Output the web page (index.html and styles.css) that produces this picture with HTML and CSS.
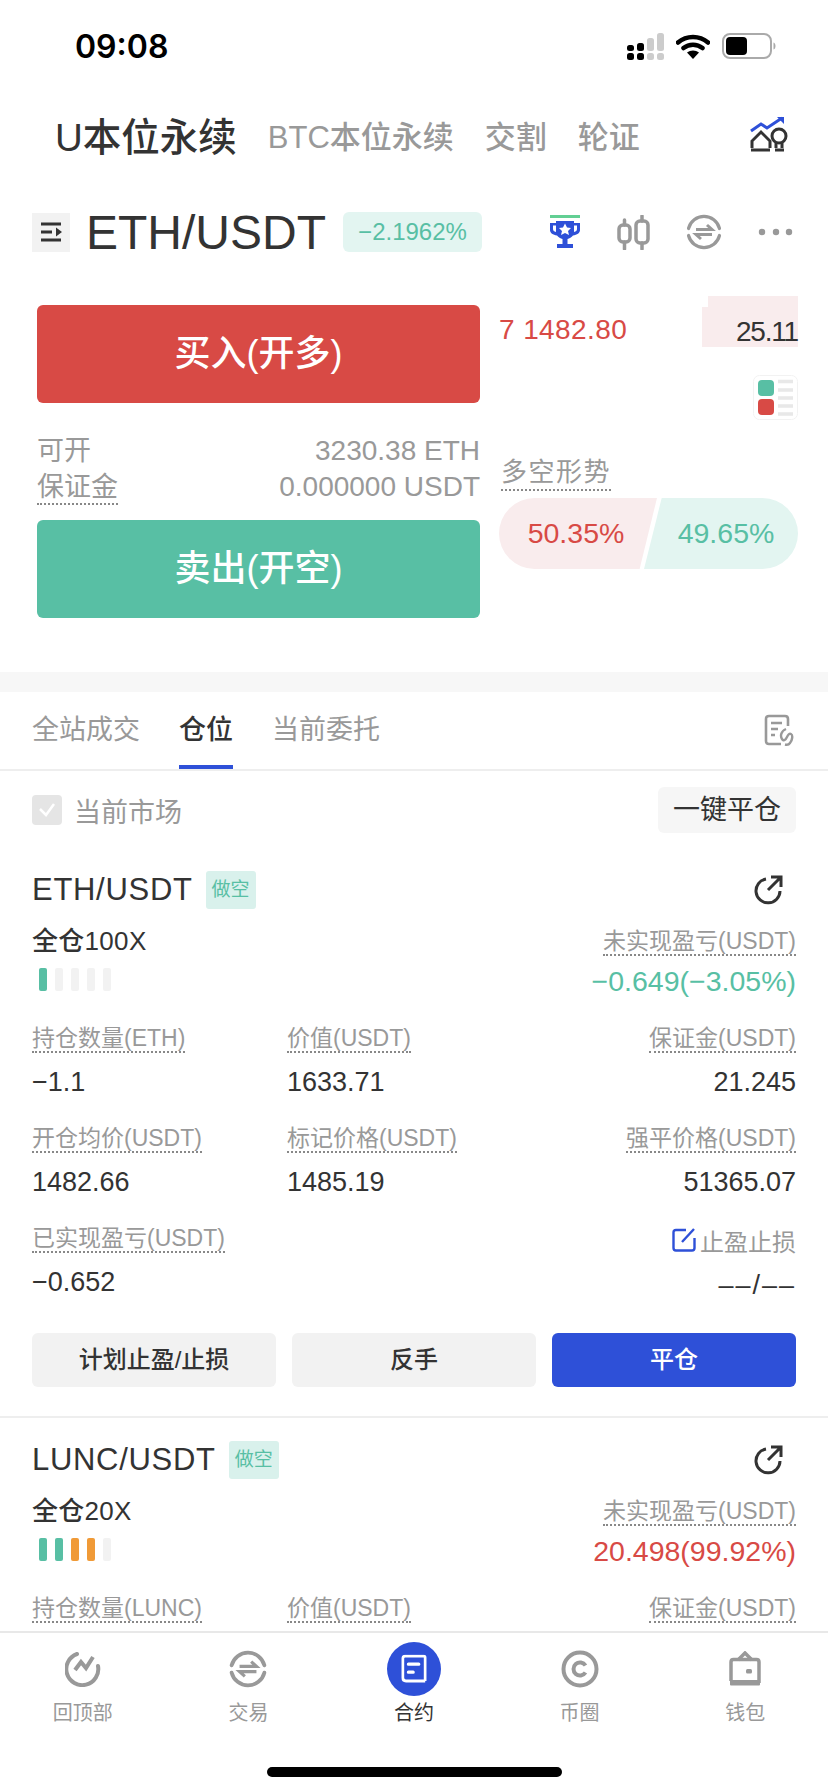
FILE: index.html
```html
<!DOCTYPE html>
<html lang="zh-CN">
<head>
<meta charset="UTF-8">
<title>ETH/USDT</title>
<meta name="viewport" content="width=device-width">
<link rel="stylesheet" href="styles.css">
</head>
<body>
<div class="screen">
<div class="main">

<div class="status">
  <span class="time">09:08</span>
  <div class="status-icons">
    <svg width="38" height="27" viewBox="0 0 38 27">
      <rect x="1" y="12" width="7" height="6" rx="2.5" fill="#000"/><rect x="11" y="10" width="7" height="8" rx="2.5" fill="#000"/>
      <rect x="1" y="20" width="7" height="7" rx="2.5" fill="#000"/><rect x="11" y="20" width="7" height="7" rx="2.5" fill="#000"/>
      <rect x="21" y="5" width="7" height="13" rx="2.5" fill="#ccc"/><rect x="31" y="0" width="7" height="18" rx="2.5" fill="#ccc"/>
      <rect x="21" y="20" width="7" height="7" rx="2.5" fill="#ccc"/><rect x="31" y="20" width="7" height="7" rx="2.5" fill="#ccc"/>
    </svg>
    <svg width="34" height="25" viewBox="0 0 34 25">
      <path d="M2 8.5C10.500 1 23.500 1 32 8.500M7.500 14C13 9.500 21 9.500 26.500 14" fill="none" stroke="#000" stroke-width="4.500" stroke-linecap="round"/>
      <path d="M11 18.500C14.500 15.800 19.500 15.800 23 18.500L17 25Z" fill="#000"/>
    </svg>
    <svg width="54" height="26" viewBox="0 0 54 26">
      <rect x="1" y="1" width="48" height="24" rx="7" fill="none" stroke="#aaa" stroke-width="2"/>
      <rect x="4" y="4" width="21" height="18" rx="4" fill="#000"/>
      <path d="M51.500 9.500C53 10 53.500 11.500 53.500 13S53 16 51.500 16.500Z" fill="#aaa"/>
    </svg>
  </div>
</div>

<div class="market-tabs">
  <span class="market-tab active">U本位永续</span>
  <span class="market-tab">BTC本位永续</span>
  <span class="market-tab">交割</span>
  <span class="market-tab">轮证</span>
  <svg class="market-icon" width="38" height="36" viewBox="0 0 38 36">
    <path d="M1 15L11 8L17 12L32 2" fill="none" stroke="#2e50d8" stroke-width="3"/>
    <path d="M27 1H34V8Z" fill="#2e50d8"/>
    <path d="M2 32V25L11 16L20 25V32" fill="none" stroke="#333" stroke-width="3"/>
    <circle cx="29" cy="20" r="7" fill="none" stroke="#333" stroke-width="3"/>
    <path d="M26 26V32M32 26V32M1 34H20M25 34H34" fill="none" stroke="#333" stroke-width="3"/>
  </svg>
</div>

<div class="symbol-row">
  <div class="side-toggle">
    <svg width="24" height="22" viewBox="0 0 24 22">
      <path d="M2 3H22M2 19H22M2 11H13" stroke="#333" stroke-width="3" fill="none"/>
      <path d="M17 6.500L23 11L17 15.500Z" fill="#333"/>
    </svg>
  </div>
  <span class="symbol-name">ETH/USDT</span>
  <span class="symbol-change">−2.1962%</span>
  <div class="symbol-icons">
    <svg width="32" height="34" viewBox="0 0 32 34">
      <rect x="1" y="0" width="30" height="3" fill="#62cf93"/>
      <path d="M7 6H25V8H31V15C31 18 28 20 24 20.500C22.500 22.500 20.500 23.500 18.500 24V29H24V33H8V29H13.500V24C11.500 23.500 9.500 22.500 8 20.500C4 20 1 18 1 15V8H7Z" fill="#2e50d8"/>
      <path d="M4 10.500H7V17C5 16.500 4 15.500 4 14ZM28 10.500H25V17C27 16.500 28 15.500 28 14Z" fill="#fff"/>
      <path d="M16 8.500L18 12.500L22 13L19 16L20 20L16 18L12 20L13 16L10 13L14 12.500Z" fill="#fff"/>
    </svg>
    <svg width="33" height="35" viewBox="0 0 33 35">
      <path d="M7.500 5V10M7.500 27V34M25 1V6M25 28V34" stroke="#999" stroke-width="3.500" stroke-linecap="round"/>
      <rect x="2" y="10" width="11" height="17" rx="4" fill="none" stroke="#999" stroke-width="3.500"/>
      <rect x="19" y="6" width="12" height="22" rx="4" fill="none" stroke="#999" stroke-width="3.500"/>
    </svg>
    <svg width="36" height="36" viewBox="0 0 36 36">
      <path d="M2.500 14.500A16 16 0 0 1 33.500 14.500M33.500 21.500A16 16 0 0 1 2.500 21.500" fill="none" stroke="#999" stroke-width="3.200" stroke-linecap="round"/>
      <path d="M10 15.500H26L21 11M26 20.500H10L15 25" fill="none" stroke="#999" stroke-width="3"/>
    </svg>
    <svg width="36" height="8" viewBox="0 0 36 8">
      <circle cx="4" cy="4" r="3.200" fill="#999"/><circle cx="18" cy="4" r="3.200" fill="#999"/><circle cx="31" cy="4" r="3.200" fill="#999"/>
    </svg>
  </div>
</div>

<div class="trade">
  <div class="trade-left">
    <div class="big-btn buy">买入(开多)</div>
    <div class="trade-info">
      <div class="info-line"><span>可开</span><span class="info-val">3230.38 ETH</span></div>
      <div class="info-line"><span class="dotted">保证金</span><span class="info-val">0.000000 USDT</span></div>
    </div>
    <div class="big-btn sell">卖出(开空)</div>
  </div>
  <div class="trade-right">
    <div class="book-row">
      <span class="book-price">7 1482.80</span>
      <div class="book-qty">
        <div class="book-depth-top"></div>
        <div class="book-depth"><span>25.11</span></div>
      </div>
    </div>
    <div class="book-switch">
      <svg width="45" height="45" viewBox="0 0 45 45">
        <rect x="0.500" y="0.500" width="44" height="44" rx="6" fill="#fff" stroke="#f2f2f2"/>
        <rect x="5" y="5" width="16" height="16" rx="4" fill="#58bfa4"/>
        <rect x="5" y="24" width="16" height="16" rx="4" fill="#d84a45"/>
        <path d="M25 6.500H40M25 15H40M25 23H40M25 31H40M25 39H40" stroke="#e8e8e8" stroke-width="3.500"/>
      </svg>
    </div>
    <div class="trend-title"><span class="dotted">多空形势</span></div>
    <div class="trend-bar">
      <div class="trend-long">50.35%</div>
      <div class="trend-short">49.65%</div>
    </div>
  </div>
</div>

<div class="band"></div>

<div class="tabs">
  <span class="tab">全站成交</span>
  <span class="tab active">仓位</span>
  <span class="tab">当前委托</span>
  <svg class="tab-icon" width="30" height="32" viewBox="0 0 30 32">
    <path d="M17 30H5C3 30 2 29 2 27V5C2 3 3 2 5 2H21C23 2 24 3 24 5V12" fill="none" stroke="#999" stroke-width="2.600"/>
    <path d="M7 9H18M7 15H14M7 21H11" stroke="#999" stroke-width="2.600"/>
    <path d="M22 15C17 17 16 22 18 25C20 28 22 25 23 23C24 21 25 19 27 20C29 21 28.500 26 26 29C25 30.500 23 31 21 30.500" fill="none" stroke="#999" stroke-width="2.400"/>
  </svg>
</div>

<div class="filter">
  <div class="check">
    <svg width="18" height="14" viewBox="0 0 18 14"><path d="M2 6L8 12L16 1" fill="none" stroke="#fff" stroke-width="2.500"/></svg>
  </div>
  <span class="check-label">当前市场</span>
  <span class="close-all">一键平仓</span>
</div>

<div class="card">
  <div class="card-head">
    <span class="pair">ETH/USDT</span>
    <span class="dir">做空</span>
    <svg class="share" width="30" height="30" viewBox="0 0 30 30">
      <path d="M13 4A12 12 0 1 0 27 16" fill="none" stroke="#333" stroke-width="3"/>
      <path d="M15 15L27 3M18 2H28V12" fill="none" stroke="#333" stroke-width="3"/>
    </svg>
  </div>
  <div class="card-top">
    <div>
      <div class="lever">全仓100X</div>
      <div class="risk">
        <i class="on"></i><i></i><i></i><i></i><i></i>
      </div>
    </div>
    <div class="pnl">
      <span class="label">未实现盈亏(USDT)</span>
      <div class="pnl-val green">−0.649(−3.05%)</div>
    </div>
  </div>
  <div class="stats">
    <div class="stat"><span class="label">持仓数量(ETH)</span><div class="val">−1.1</div></div>
    <div class="stat"><span class="label">价值(USDT)</span><div class="val">1633.71</div></div>
    <div class="stat right"><span class="label">保证金(USDT)</span><div class="val">21.245</div></div>
    <div class="stat"><span class="label">开仓均价(USDT)</span><div class="val">1482.66</div></div>
    <div class="stat"><span class="label">标记价格(USDT)</span><div class="val">1485.19</div></div>
    <div class="stat right"><span class="label">强平价格(USDT)</span><div class="val">51365.07</div></div>
    <div class="stat"><span class="label">已实现盈亏(USDT)</span><div class="val">−0.652</div></div>
    <div class="stat"></div>
    <div class="stat right">
      <span class="tpsl">
        <svg width="24" height="24" viewBox="0 0 24 24">
          <path d="M14 2H4C2.500 2 1.500 3 1.500 4.500V20C1.500 21.500 2.500 22.500 4 22.500H20C21.500 22.500 22.500 21.500 22.500 20V10" fill="none" stroke="#2e50d8" stroke-width="2.400"/>
          <path d="M10 14L22 1" fill="none" stroke="#2e50d8" stroke-width="2.400"/>
        </svg>止盈止损
      </span>
      <div class="val thin">––/––</div>
    </div>
  </div>
  <div class="actions">
    <div class="action">计划止盈/止损</div>
    <div class="action">反手</div>
    <div class="action primary">平仓</div>
  </div>
</div>

<div class="card">
  <div class="card-head">
    <span class="pair">LUNC/USDT</span>
    <span class="dir">做空</span>
    <svg class="share" width="30" height="30" viewBox="0 0 30 30">
      <path d="M13 4A12 12 0 1 0 27 16" fill="none" stroke="#333" stroke-width="3"/>
      <path d="M15 15L27 3M18 2H28V12" fill="none" stroke="#333" stroke-width="3"/>
    </svg>
  </div>
  <div class="card-top">
    <div>
      <div class="lever">全仓20X</div>
      <div class="risk">
        <i class="on"></i><i class="on"></i><i class="warn"></i><i class="warn"></i><i></i>
      </div>
    </div>
    <div class="pnl">
      <span class="label">未实现盈亏(USDT)</span>
      <div class="pnl-val red">20.498(99.92%)</div>
    </div>
  </div>
  <div class="stats">
    <div class="stat"><span class="label">持仓数量(LUNC)</span></div>
    <div class="stat"><span class="label">价值(USDT)</span></div>
    <div class="stat right"><span class="label">保证金(USDT)</span></div>
  </div>
</div>

</div>

<div class="nav">
  <div class="nav-items">
    <div class="nav-item">
      <div class="nav-icon">
        <svg width="36" height="36" viewBox="0 0 36 36">
          <path d="M12 3A16 16 0 1 0 33 15" fill="none" stroke="#999" stroke-width="4" stroke-linecap="round"/>
          <path d="M10 19L16 11L21 17L28 6" fill="none" stroke="#999" stroke-width="4"/>
        </svg>
      </div>
      <span>回顶部</span>
    </div>
    <div class="nav-item">
      <div class="nav-icon">
        <svg width="38" height="38" viewBox="0 0 36 36">
          <path d="M2.500 14.500A16 16 0 0 1 33.500 14.500M33.500 21.500A16 16 0 0 1 2.500 21.500" fill="none" stroke="#999" stroke-width="3.600" stroke-linecap="round"/>
          <path d="M10 15.500H26L21 11M26 20.500H10L15 25" fill="none" stroke="#999" stroke-width="3"/>
        </svg>
      </div>
      <span>交易</span>
    </div>
    <div class="nav-item current">
      <div class="nav-icon">
        <div class="nav-bubble">
          <svg width="32" height="36" viewBox="0 0 32 36">
            <path d="M30 33H6C3.500 33 2 31.500 2 29V5C2 3.500 3 2 5 2H28C29.500 2 30 3 30 4V33" fill="none" stroke="#fff" stroke-width="3.500"/>
            <path d="M9 12H22M9 22H15" stroke="#fff" stroke-width="4" stroke-linecap="round"/>
          </svg>
        </div>
      </div>
      <span>合约</span>
    </div>
    <div class="nav-item">
      <div class="nav-icon">
        <svg width="38" height="38" viewBox="0 0 38 38">
          <circle cx="19" cy="19" r="16.500" fill="none" stroke="#999" stroke-width="4"/>
          <path d="M24.500 15.500A6.500 6.500 0 1 0 24.500 22.500" fill="none" stroke="#999" stroke-width="4"/>
        </svg>
      </div>
      <span>币圈</span>
    </div>
    <div class="nav-item">
      <div class="nav-icon">
        <svg width="32" height="36" viewBox="0 0 32 36">
          <path d="M9 9L16 2L23 9" fill="none" stroke="#999" stroke-width="3.500"/>
          <path d="M30 32V11C30 9.500 29 8.500 27.500 8.500H4.500C3 8.500 2 9.500 2 11V30" fill="none" stroke="#999" stroke-width="3.500"/>
          <rect x="1" y="29" width="30" height="5.500" rx="1" fill="#999"/>
          <rect x="17" y="18" width="6" height="4.500" rx="1.500" fill="#999"/>
        </svg>
      </div>
      <span>钱包</span>
    </div>
  </div>
  <div class="home-bar"></div>
</div>
</div>
</body>
</html>
```

FILE: styles.css
```css
* {box-sizing: border-box;}

body {margin: 0;
      background: #fff;
      font-family: "Liberation Sans", "Noto Sans CJK SC", sans-serif;
      color: #333;}

.screen {width: 828px;
         height: 1792px;
         display: flex;
         flex-direction: column;
         overflow: hidden;}

.main {flex: 1;
       min-height: 0;
       overflow: hidden;}

/* status bar */
.status {height: 92px;
         padding: 0 52px 0 75px;
         display: flex;
         align-items: center;
         justify-content: space-between;}
.time {font-family: "Inter", sans-serif;
       font-size: 32px;
       font-weight: 600;
       color: #000;}
.status-icons {display: flex;
               align-items: center;
               gap: 12px;}

/* top tabs */
.market-tabs {height: 84px;
              padding: 0 40px 0 55px;
              display: flex;
              align-items: center;
              gap: 31px;}
.market-tab {font-size: 31px;
             color: #999;
             font-weight: 500;}
.market-tab.active {font-size: 38.500px;
                    color: #333;}
.market-icon {margin-left: auto;}

.symbol-row {height: 112px;
             padding: 0 34px 0 32px;
             display: flex;
             align-items: center;}
.side-toggle {width: 38px;
              height: 39px;
              background: #f2f2f2;
              display: flex;
              align-items: center;
              justify-content: center;}
.symbol-name {font-size: 48px;
              margin-left: 16px;}
.symbol-change {margin-left: 17px;
                width: 139px;
                height: 40px;
                line-height: 40px;
                border-radius: 6px;
                background: #e3f5f1;
                color: #58bfa4;
                font-size: 24px;
                text-align: center;}
.symbol-icons {margin-left: auto;
               display: flex;
               align-items: center;
               gap: 36px;}

/* buy / sell */
.trade {height: 367px;
        margin-top: 17px;
        padding: 0 30px 0 37px;
        display: flex;
        gap: 19px;}
.trade-left {width: 443px;}
.trade-right {width: 299px;}

.big-btn {height: 98px;
          line-height: 98px;
          border-radius: 6px;
          color: #fff;
          font-size: 36px;
          font-weight: 500;
          text-align: center;}
.buy {background: #d84a45;}
.sell {background: #58bfa4;}

.trade-info {height: 117px;
             padding-top: 30px;
             font-size: 27px;
             color: #999;}
.info-line {display: flex;
            justify-content: space-between;
            height: 36px;
            line-height: 36px;}
.info-val {font-size: 28px;}

.dotted {display: inline-block;
         border-bottom: 2px dotted #888;}
.info-line .dotted {height: 36px;}

.book-row {display: flex;
           justify-content: space-between;
           align-items: flex-end;
           font-size: 28px;}
.book-price {color: #d84a45;
             letter-spacing: 0.4px;
             line-height: 34px;}
.book-qty {width: 96px;}
.book-depth-top {height: 11px;
                 margin-left: 6px;
                 margin-top: -9px;
                 background: #f9eced;}
.book-depth {height: 40px;
             line-height: 49px;
             background: #f9eced;
             text-align: right;
             letter-spacing: -1.200px;}

.book-switch {margin-top: 28px;
              height: 45px;
              display: flex;
              justify-content: flex-end;}
.trend-title {margin-top: 35px;
              height: 43px;
              padding-left: 2px;
              font-size: 26px;
              color: #999;}
.trend-title .dotted {height: 36px;
                      line-height: 34px;
                      letter-spacing: 1.500px;}
.trend-bar {height: 71px;
            display: flex;
            font-size: 28.500px;
            line-height: 71px;
            text-align: center;}
.trend-long {width: 158px;
             flex: none;
             padding-right: 4px;
             background: #f9eced;
             color: #d84a45;
             border-radius: 36px 0 0 36px;
             clip-path: polygon(0 0, 100% 0, 89% 100%, 0 100%);}
.trend-short {flex: 1;
              margin-left: -13px;
              padding-left: 10px;
              background: #e3f5f1;
              color: #58bfa4;
              border-radius: 0 36px 36px 0;
              clip-path: polygon(11.500% 0, 100% 0, 100% 100%, 0 100%);}

.band {height: 20px;
       background: #f7f7f7;}

/* list tabs */
.tabs {height: 79px;
       padding: 0 34px 0 32px;
       display: flex;
       align-items: stretch;
       gap: 39px;
       border-bottom: 2px solid #eee;}
.tab {font-size: 27px;
      padding-top: 2px;
      line-height: 73px;
      color: #999;
      border-bottom: 4px solid transparent;}
.tab.active {color: #333;
             font-weight: 500;
             border-bottom-color: #2e50d8;}
.tab-icon {margin-left: auto;
           align-self: center;
           margin-top: -1px;}

.filter {height: 77px;
         padding: 16px 32px 15px;
         display: flex;
         align-items: center;}
.check {width: 30px;
        height: 30px;
        border-radius: 4px;
        background: #e5e5e5;
        display: flex;
        align-items: center;
        justify-content: center;}
.check-label {margin-left: 12px;
              font-size: 27px;
              color: #999;}
.close-all {margin-left: auto;
            width: 138px;
            height: 46px;
            line-height: 46px;
            border-radius: 6px;
            background: #f6f6f6;
            text-align: center;
            font-size: 27px;}

/* position card */
.card {padding: 23px 32px 29px;
       border-bottom: 2px solid #eee;}
.card-head {height: 38px;
            display: flex;
            align-items: center;}
.pair {font-size: 31px;
       letter-spacing: 0.700px;}
.dir {margin-left: 13px;
      width: 50px;
      height: 38px;
      line-height: 38px;
      border-radius: 3px;
      background: #d9f1ec;
      color: #58bfa4;
      font-size: 19px;
      text-align: center;}
.share {margin-left: auto;
        margin-right: 13px;}

.card-top {margin-top: 19px;
           display: flex;
           justify-content: space-between;}
.lever {font-size: 26px;
        line-height: 26px;
        font-weight: 500;
        letter-spacing: 0.300px;}
.risk {margin-top: 14px;
       margin-left: 7px;
       display: flex;
       gap: 8px;}
.risk i {width: 8px;
         height: 23px;
         border-radius: 2px;
         background: #f2f2f2;}
.risk i.on {background: #58bfa4;}
.risk i.warn {background: #f09a37;}

.pnl {text-align: right;}
.label {display: inline-block;
        height: 28px;
        line-height: 27px;
        font-size: 23px;
        color: #999;
        border-bottom: 2px dotted #888;}
.pnl-val {margin-top: 10px;
          font-size: 28.500px;
          line-height: 30px;}
.green {color: #58bfa4;}
.red {color: #d84a45;}

.stats {margin-top: 29px;
        display: grid;
        grid-template-columns: 255px 1fr auto;
        row-gap: 25px;}
.stat {height: 75px;}
.stat.right {text-align: right;}
.val {margin-top: 11px;
      font-size: 27px;
      line-height: 36px;
      font-weight: 500;}
.val.thin {font-weight: 400;
           letter-spacing: 2px;}
.tpsl {display: inline-flex;
       align-items: center;
       gap: 4px;
       height: 28px;
       margin-top: 1px;
       font-size: 24px;
       color: #999;}

.actions {margin-top: 33px;
          display: flex;
          gap: 16px;}
.action {flex: 1;
         height: 54px;
         line-height: 54px;
         border-radius: 6px;
         background: #f2f2f2;
         font-size: 24px;
         font-weight: 500;
         text-align: center;}
.action.primary {background: #2e50d8;
                 color: #fff;}

/* bottom nav */
.nav {height: 161px;
      flex: none;
      border-top: 2px solid #e8e8e8;}
.nav-items {display: flex;
            padding-top: 9px;}
.nav-item {width: 165.600px;
           text-align: center;
           font-size: 20px;
           line-height: 28px;
           color: #999;}
.nav-item.current {color: #333;}
.nav-icon {height: 54px;
           margin-bottom: 3px;
           display: flex;
           align-items: center;
           justify-content: center;}
.nav-bubble {width: 54px;
             height: 54px;
             border-radius: 50%;
             background: #2e50d8;
             display: flex;
             align-items: center;
             justify-content: center;}
.nav-bubble svg {transform: scale(.8);}
.home-bar {width: 295px;
           height: 10px;
           margin: 40px auto 0;
           border-radius: 5px;
           background: #000;}
```
